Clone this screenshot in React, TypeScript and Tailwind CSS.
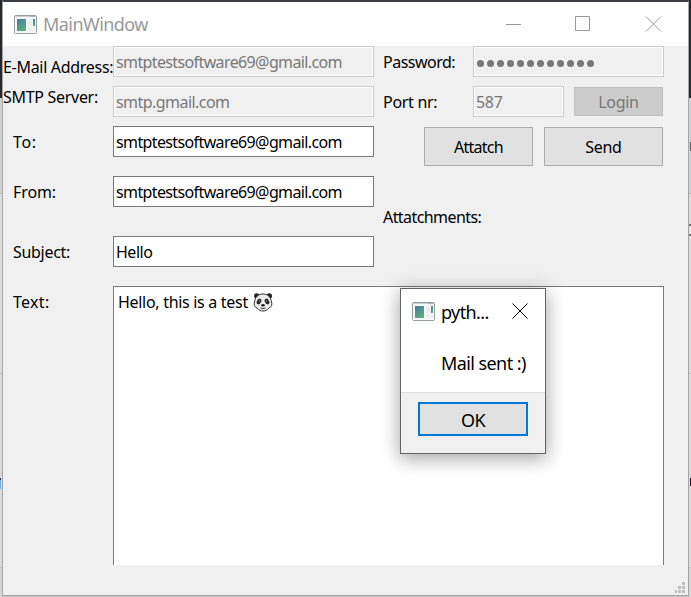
import type { ReactNode } from "react";

function AppIcon() {
  return (
    <svg width="23" height="19" viewBox="0 0 23 19" className="block shrink-0" aria-hidden="true">
      <defs>
        <linearGradient id="pane" x1="0" y1="0" x2="0.6" y2="1">
          <stop offset="0" stopColor="#467ba2" />
          <stop offset="1" stopColor="#5cad7c" />
        </linearGradient>
      </defs>
      <rect x="0.5" y="0.5" width="22" height="18" rx="1" fill="#f7f8f8" stroke="#969ba0" />
      <rect x="1" y="1" width="21" height="1" fill="#c9ced3" />
      <rect x="16" y="1" width="5" height="1" fill="#a3b2c4" />
      <rect x="3" y="4" width="9" height="12" fill="url(#pane)" />
      <rect x="14" y="4" width="4" height="7" fill="#eceeee" />
      <rect x="14" y="12" width="4" height="4" fill="#eceeee" />
      <rect x="19" y="4" width="2" height="7" fill="url(#pane)" />
      <rect x="19" y="12" width="2" height="4" fill="#eceeee" />
    </svg>
  );
}

function Panda() {
  return (
    <svg width="20" height="20" viewBox="0 0 20 20" className="ml-[5px] block shrink-0" role="img" aria-label="panda">
      <circle cx="3.8" cy="4" r="2.8" fill="#222" />
      <circle cx="16.2" cy="4" r="2.8" fill="#222" />
      <path d="M10 2C5 2 2 5.500 1.500 10C.5 12.500 1.500 15 4 16C6 18.500 8 19 10 19S14 18.500 16 16C18.500 15 19.500 12.500 18.500 10C18 5.500 15 2 10 2Z" fill="#ececec" stroke="#333" strokeWidth="1" />
      <ellipse cx="6" cy="9.500" rx="2" ry="3" transform="rotate(30 6 9.500)" fill="#222" />
      <ellipse cx="14" cy="9.500" rx="2" ry="3" transform="rotate(-30 14 9.500)" fill="#222" />
      <circle cx="6.500" cy="9" r=".6" fill="#ddd" />
      <circle cx="13.500" cy="9" r=".6" fill="#ddd" />
      <ellipse cx="10" cy="13.300" rx="1.800" ry="1.200" fill="#222" />
      <path d="M7.500 16Q10 17 12.500 16" fill="none" stroke="#333" />
    </svg>
  );
}

function Field({ children, className = "", disabled = false }: { children: ReactNode; className?: string; disabled?: boolean }) {
  const look = disabled
    ? "border-[#cccccc] bg-[#f0f0f0] text-[#787878] shadow-[inset_0_0_0_1px_#ffffff]"
    : "border-[#7a7a7a] bg-white text-black";
  return (
    <div className={`flex h-[31px] shrink-0 items-center border pl-[2px] whitespace-nowrap ${look} ${className}`}>
      {children}
    </div>
  );
}

function Desktop({ side }: { side: "left" | "right" }) {
  return (
    <>
      <div className="h-[98px] shrink-0 bg-[#25282d]" />
      <div className="h-[96px] shrink-0 border-b border-[#bcbcbc] bg-[#cfd1d3] pt-[44px]">
        {side === "right" && <div className="ml-px h-[9px] bg-[#55585c]" />}
      </div>
      <div className="h-[180px] shrink-0 border-b border-[#c4c4c4] bg-[#dcdcdc] pt-[30px]">
        {side === "right" && <div className="h-[12px] border-y-2 border-[#777777]" />}
      </div>
      <div className="h-[194px] shrink-0 border-b border-[#c0c0c0] bg-[#dadada] pt-[104px]">
        {side === "left" ? (
          <div className="h-[11px] w-px border-t-2 border-[#20304c] bg-[#6fb0e6]" />
        ) : (
          <div className="ml-px h-[8px] bg-[#1c1828]" />
        )}
      </div>
      <div className="flex-1 bg-[#d4d4d4]" />
    </>
  );
}

export default function App() {
  return (
    <div className="relative flex h-[597px] w-[691px] overflow-hidden bg-[#c8c8c8] font-['Noto_Sans',sans-serif] text-[16px] leading-[20px] text-black">
      <div className="flex w-[2px] shrink-0 flex-col"><Desktop side="left" /></div>

      <div className="flex h-[596px] w-[687px] shrink-0 flex-col border border-t-2 border-[#a6a6a6] border-t-[#3b3e44] bg-[#f0f0f0]">
        <header className="flex h-[44px] shrink-0 items-center bg-white pl-[11px] text-[#999999]">
          <AppIcon />
          <span className="ml-[6px] w-[463px] text-[18px] tracking-[-0.55px]">MainWindow</span>
          <svg width="160" height="16" viewBox="0 0 160 16" fill="none" stroke="currentColor" className="-mt-px" aria-hidden="true">
            <path d="M0 8.500H15M69.500 .5H83.500V14.500H69.500ZM140 .5L155 15.500M155 .5L140 15.500" />
          </svg>
        </header>

        <div className="flex h-[240px] shrink-0">
          <div className="flex w-[110px] shrink-0 flex-col whitespace-nowrap">
            <span className="mt-[11px] h-[30px] tracking-[-0.3px]">E-Mail Address:</span>
            <span className="h-[45px] tracking-[-0.3px]">SMTP Server:</span>
            <span className="h-[50px] pl-[10px] tracking-[0.6px]">To:</span>
            <span className="h-[60px] pl-[10px] tracking-[-0.1px]">From:</span>
            <span className="pl-[10px] tracking-[-0.3px]">Subject:</span>
          </div>
          <div className="flex w-[261px] shrink-0 flex-col tracking-[-0.62px]">
            <Field disabled>smtptestsoftware69@gmail.com</Field>
            <Field disabled className="mt-[9px] tracking-[-0.55px]">smtp.gmail.com</Field>
            <Field className="mt-[9px]">smtptestsoftware69@gmail.com</Field>
            <Field className="mt-[19px]">smtptestsoftware69@gmail.com</Field>
            <Field className="mt-[29px] tracking-[-0.5px]">Hello</Field>
          </div>
          <div className="ml-[9px] flex w-[281px] flex-col tracking-[-0.3px]">
            <div className="flex">
              <span className="mt-[6px] w-[90px] tracking-[-0.5px]">Password:</span>
              <Field disabled className="w-[191px]">
                <span className="flex gap-[3px] pl-px" aria-label="password">
                  {Array.from({ length: 12 }, (_, i) => (
                    <span key={i} className="mt-[3px] size-[7px] rounded-full bg-[#787878]" />
                  ))}
                </span>
              </Field>
            </div>
            <div className="mt-[9px] flex">
              <span className="mt-[6px] w-[90px]">Port nr:</span>
              <Field disabled className="w-[91px]">587</Field>
              <button className="mt-px ml-[10px] flex h-[29px] w-[89px] items-center justify-center border border-[#bfbfbf] bg-[#cccccc] text-[#787878]">Login</button>
            </div>
            <div className="mt-[10px] ml-[41px] flex gap-[11px]">
              <button className="h-[39px] w-[109px] border border-[#adadad] bg-[#e1e1e1] tracking-[-0.75px]">Attatch</button>
              <button className="h-[39px] w-[119px] border border-[#adadad] bg-[#e1e1e1]">Send</button>
            </div>
            <span className="mt-[41px] tracking-[-0.57px]">Attatchments:</span>
          </div>
        </div>

        <div className="flex h-[279px] shrink-0">
          <span className="mt-[6px] w-[110px] pl-[10px] tracking-[0.3px]">Text:</span>
          <div className="flex w-[551px] items-start border border-b-0 border-[#7a7a7a] bg-white pt-[5px] pl-1">
            <span className="tracking-[-0.3px]">Hello, this is a test</span>
            <Panda />
          </div>
        </div>

        <footer className="flex flex-1 items-end justify-end pr-[3px] pb-[2px]">
          <svg width="10" height="11" viewBox="0 0 10 11" fill="#bfbfbf" shapeRendering="crispEdges" aria-hidden="true">
            <path d="M7 0h3v3H7zM3 4h3v3H3zM7 4h3v3H7zM0 8h2v3H0zM3 8h3v3H3zM7 8h3v3H7z" />
          </svg>
        </footer>
      </div>

      <div className="flex w-[2px] shrink-0 flex-col"><Desktop side="right" /></div>

      <div role="dialog" className="absolute top-[288px] left-[400px] flex h-[166px] w-[146px] flex-col border border-[#646464] bg-white text-[18px] shadow-[0_4px_18px_rgba(0,0,0,0.38)]">
        <div className="flex h-[44px] shrink-0 items-center pl-[11px]">
          <AppIcon />
          <span className="mt-px ml-[6px] w-[71px] shrink-0 tracking-[-0.6px]">pyth...</span>
          <svg width="16" height="16" viewBox="0 0 16 16" fill="none" stroke="currentColor" className="shrink-0" aria-hidden="true">
            <path d="M.5 .5L15.500 15.500M15.500 .5L.5 15.500" />
          </svg>
        </div>
        <p className="h-[59px] shrink-0 pt-[20px] pl-[40px] tracking-[-0.58px] whitespace-nowrap">Mail sent :)</p>
        <div className="flex-1 border-t border-[#dfdfdf] bg-[#f0f0f0] pt-[9px] pl-[17px]">
          <button className="block h-[34px] w-[110px] border-2 border-[#0078d7] bg-[#e1e1e1] pt-[2px] tracking-[-0.5px]">OK</button>
        </div>
      </div>
    </div>
  );
}
